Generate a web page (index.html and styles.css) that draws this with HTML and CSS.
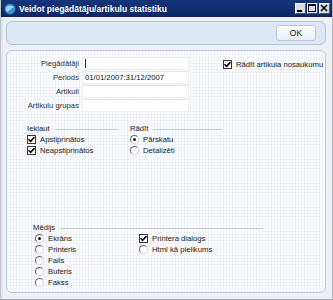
FILE: index.html
```html
<!DOCTYPE html>
<html>
<head>
<meta charset="utf-8">
<link rel="stylesheet" href="styles.css">
</head>
<body>
<div class="window">
  <div class="titlebar">
    <svg class="appicon" width="12" height="12" viewBox="0 0 12 12"><circle cx="6" cy="6" r="5.5" fill="#3a8fd8"/><path d="M2 4 Q6 1 10 4 Q7 6 3 9 Q1 7 2 4Z" fill="#9fd3f7"/><circle cx="6" cy="6" r="5.5" fill="none" stroke="#1b4d8c" stroke-width="0.8"/></svg>
    <span class="title">Veidot piegādātāju/artikulu statistiku</span>
    <div class="wbtns">
      <span class="wbtn"><svg width="9" height="9" viewBox="0 0 9 9"><rect x="1" y="6" width="5" height="2" fill="#000"/></svg></span>
      <span class="wbtn"><svg width="9" height="9" viewBox="0 0 9 9"><rect x="0.5" y="0.5" width="7" height="7" fill="none" stroke="#000"/><rect x="0.5" y="0.5" width="7" height="1.5" fill="#000"/></svg></span>
      <span class="wbtn"><svg width="9" height="9" viewBox="0 0 9 9"><path d="M1 1 L7 7 M7 1 L1 7" stroke="#000" stroke-width="1.6"/></svg></span>
    </div>
  </div>
  <div class="content">
    <div class="toolbar">
      <button class="okbtn">OK</button>
    </div>
    <div class="main">
      <div class="top">
        <div class="fields">
          <label class="flabel">Piegādātāji</label><div class="input"><span class="caret"></span></div>
          <label class="flabel">Periods</label><div class="input">01/01/2007:31/12/2007</div>
          <label class="flabel">Artikuli</label><div class="input"></div>
          <label class="flabel">Artikulu grupas</label><div class="input"></div>
        </div>
        <div class="opt topcheck"><span class="cb checked"><svg width="7" height="7" viewBox="0 0 7 7"><path d="M0.5 3.2 L2.6 5.4 L6.5 1" fill="none" stroke="#000" stroke-width="1.6"/></svg></span>Rādīt artikula nosaukumu</div>
      </div>
      <div class="groups">
        <div class="group g1">
          <div class="ghead"><span>Iekļaut</span><span class="gline"></span></div>
          <div class="opt"><span class="cb checked"><svg width="7" height="7" viewBox="0 0 7 7"><path d="M0.5 3.2 L2.6 5.4 L6.5 1" fill="none" stroke="#000" stroke-width="1.6"/></svg></span>Apstiprinātos</div>
          <div class="opt"><span class="cb checked"><svg width="7" height="7" viewBox="0 0 7 7"><path d="M0.5 3.2 L2.6 5.4 L6.5 1" fill="none" stroke="#000" stroke-width="1.6"/></svg></span>Neapstiprinātos</div>
        </div>
        <div class="group g2">
          <div class="ghead"><span>Rādīt</span><span class="gline"></span></div>
          <div class="opt"><span class="rb on"></span>Pārskatu</div>
          <div class="opt"><span class="rb"></span>Detalizēti</div>
        </div>
      </div>
      <div class="media">
        <div class="ghead"><span>Mēdijs</span><span class="gline"></span></div>
        <div class="mcols">
          <div class="mcol">
            <div class="opt"><span class="rb on"></span>Ekrāns</div>
            <div class="opt"><span class="rb"></span>Printeris</div>
            <div class="opt"><span class="rb"></span>Fails</div>
            <div class="opt"><span class="rb"></span>Buferis</div>
            <div class="opt"><span class="rb"></span>Fakss</div>
          </div>
          <div class="mcol mcol2">
            <div class="opt"><span class="cb checked"><svg width="7" height="7" viewBox="0 0 7 7"><path d="M0.5 3.2 L2.6 5.4 L6.5 1" fill="none" stroke="#000" stroke-width="1.6"/></svg></span>Printera dialogs</div>
            <div class="opt"><span class="rb"></span>Html kā pielikums</div>
          </div>
        </div>
      </div>
    </div>
  </div>
</div>
</body>
</html>
```
FILE: styles.css
```css
* { box-sizing: border-box; }
html, body { margin: 0; padding: 0; }
body {
  width: 333px; height: 300px; overflow: hidden;
  font-family: "Liberation Sans", Arial, sans-serif;
  font-size: 7.7px; color: #222;
  background: #d8d8d8;
}
.window {
  width: 333px; height: 300px;
  background: #eef0f3;
  border-left: 1px solid #c0c4cc;
  border-right: 1px solid #b0b4bc;
  border-bottom: 1px solid #a0a4ac;
  display: flex; flex-direction: column;
}
.titlebar {
  height: 17px; flex: none;
  background: linear-gradient(#16357a, #0c2764);
  display: flex; align-items: center;
  padding: 0 2px 0 3px;
  color: #fff;
}
.appicon { flex: none; margin-right: 3px; }
.title { font-weight: bold; font-size: 8.5px; font-family: "Liberation Sans", Arial, sans-serif; }
.wbtns { margin-left: auto; display: flex; gap: 1px; }
.wbtn {
  width: 11px; height: 11px;
  background: #d8dce4;
  border: 1px solid #f4f4f4; border-right-color: #555; border-bottom-color: #555;
  display: flex; align-items: center; justify-content: center;
}
.wbtn svg { display: block; }
.content {
  flex: 1;
  padding: 4px 6px 6px 3px;
  display: flex; flex-direction: column;
  border-left: 2px solid #e2e4e8;
}
.toolbar {
  height: 24px; flex: none;
  border: 1px solid #aec4e2; border-radius: 6px;
  background: #dde7f6;
  display: flex; align-items: center; justify-content: flex-end;
  padding-right: 9px;
}
.okbtn {
  width: 40px; height: 16px;
  font-family: "Liberation Sans", Arial, sans-serif; font-size: 8.5px; color: #111;
  border: 1px solid #b6c6dc; border-radius: 3px;
  background: linear-gradient(#ffffff, #e9eef6);
  padding: 0;
}
.main {
  margin-top: 5px;
  flex: 1;
  border: 1px solid #b9cbe6; border-radius: 6px;
  background-color: #fbfcfe;
  background-image:
    repeating-linear-gradient(0deg, rgba(200,210,230,0.18) 0 1px, transparent 1px 3px),
    repeating-linear-gradient(90deg, rgba(200,210,230,0.18) 0 1px, transparent 1px 3px);
  padding: 6px 0 0 0;
  display: flex; flex-direction: column;
}
.top { display: flex; align-items: flex-start; }
.fields {
  display: grid;
  grid-template-columns: 72px 107px;
  column-gap: 3px; row-gap: 1px;
  grid-auto-rows: 13px;
}
.flabel { text-align: right; align-self: center; color: #333; }
.input {
  background: #fff;
  border: 1px solid #eef0f4;
  border-top-color: #e4e6ea;
  padding-left: 2px;
  display: flex; align-items: center;
  color: #111;
}
.caret { width: 1px; height: 9px; background: #333; }
.topcheck { margin-left: 34px; margin-top: 2px; }
.opt { display: flex; align-items: center; height: 11px; white-space: nowrap; color: #222; }
.cb {
  width: 9px; height: 9px; flex: none;
  border: 1px solid #3a3a3a;
  background: #fff;
  margin-right: 4px;
  display: flex; align-items: center; justify-content: center;
}
.cb svg { display: block; }
.rb {
  width: 9px; height: 9px; flex: none;
  border-radius: 50%;
  border: 1px solid #888;
  border-top-color: #666; border-left-color: #666;
  border-bottom-color: #d8d8d8; border-right-color: #d8d8d8;
  background: #fff;
  margin-right: 4px;
  display: flex; align-items: center; justify-content: center;
}
.rb.on::after { content: ""; width: 3px; height: 3px; border-radius: 50%; background: #111; }
.groups { display: flex; margin-top: 11px; padding-left: 20px; }
.group { display: flex; flex-direction: column; }
.g1 { width: 91px; }
.g2 { width: 92px; margin-left: 12px; }
.ghead { display: flex; align-items: center; height: 10px; color: #222; margin-bottom: 1px; }
.gline { flex: 1; height: 1px; background: #c8ccd4; margin-left: 5px; margin-top: 2px; }
.media { margin-top: 66px; padding-left: 26px; width: 256px; }
.mcols { display: flex; padding-left: 2px; }
.mcol { width: 104px; }
```
